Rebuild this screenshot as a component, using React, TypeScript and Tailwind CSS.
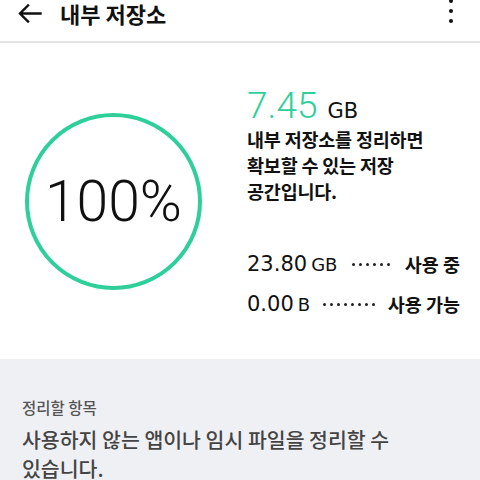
import React from "react";

const KR = "font-['Noto_Sans_CJK_KR',sans-serif]";
const NUM = "font-['Roboto','Noto_Sans_CJK_KR',sans-serif]";
const WIDE = "font-['DejaVu_Sans','Noto_Sans_CJK_KR',sans-serif]";

function BackArrow() {
  return (
    <svg width="24" height="19" viewBox="0 0 24 19" fill="none">
      <path
        d="M22.5 9.5H2.5M10 1.5L2 9.5l8 8"
        stroke="#111"
        strokeWidth="2.4"
        strokeLinecap="square"
      />
    </svg>
  );
}

function Dots({ count }: { count: number }) {
  return (
    <div className="flex items-center gap-[4px]">
      {Array.from({ length: count }).map((_, i) => (
        <span key={i} className="w-[3px] h-[3px] rounded-full bg-[#222]" />
      ))}
    </div>
  );
}

type Row = { value: string; unit: string; dots: number; label: string };

const rows: Row[] = [
  { value: "23.80", unit: "GB", dots: 6, label: "사용 중" },
  { value: "0.00", unit: "B", dots: 8, label: "사용 가능" },
];

export default function App() {
  return (
    <div className={`w-[480px] h-[480px] overflow-hidden bg-white ${KR}`}>
      <header className="h-[43px] flex items-start justify-between border-b-2 border-[#e3e3e3] pl-[18px] pr-[27px]">
        <div className="flex items-center h-[27px] gap-[18px]">
          <BackArrow />
          <h1 className={`text-[22px] leading-[27px] font-bold text-[#111] ${KR}`}>
            내부 저장소
          </h1>
        </div>
        <div className="flex flex-col items-center gap-[6px] -mt-[1px]">
          <span className="w-[4px] h-[4px] rounded-full bg-[#111]" />
          <span className="w-[4px] h-[4px] rounded-full bg-[#111]" />
          <span className="w-[4px] h-[4px] rounded-full bg-[#111]" />
        </div>
      </header>

      <section className="h-[316px] flex items-center pl-[25px]">
        <div className="w-[177px] h-[177px] shrink-0 rounded-full border-[4px] border-[#2fcf9a] flex items-center justify-center">
          <span className={`text-[57px] leading-none font-light text-[#111] ${NUM}`}>
            100%
          </span>
        </div>

        <div className="self-start mt-[44px] ml-[45px] w-[213px] flex flex-col">
          <div className="flex items-baseline">
            <span className={`text-[37px] leading-none font-light text-[#2fcf9a] ${NUM}`}>
              7.45
            </span>
            <span className={`ml-[10px] text-[21px] leading-none text-[#111] ${WIDE}`}>
              GB
            </span>
          </div>
          <p className="mt-[2px] text-[18.5px] leading-[26px] font-semibold text-[#111] tracking-[-0.2px]">
            내부 저장소를 정리하면
            <br />
            확보할 수 있는 저장
            <br />
            공간입니다.
          </p>

          <div className="mt-[47px] flex flex-col gap-[14px]">
            {rows.map((row) => (
              <div key={row.label} className="flex items-center h-[26px]">
                <div className={`flex items-baseline ${WIDE}`}>
                  <span className="text-[21px] leading-none text-[#111]">
                    {row.value}
                  </span>
                  <span className="ml-[4px] text-[18px] leading-none text-[#111]">
                    {row.unit}
                  </span>
                </div>
                <div className="flex-1 flex justify-center">
                  <Dots count={row.dots} />
                </div>
                <span className="text-[18.5px] leading-none font-semibold text-[#111]">
                  {row.label}
                </span>
              </div>
            ))}
          </div>
        </div>
      </section>

      <section className="bg-[#eff0f4] h-[121px] pt-[38px] px-[22px]">
        <h2 className="text-[15.5px] leading-[20px] font-medium text-[#555]">
          정리할 항목
        </h2>
        <p className="mt-[8px] text-[20.5px] leading-[29px] font-medium text-[#444] whitespace-nowrap">
          사용하지 않는 앱이나 임시 파일을 정리할 수
          <br />
          있습니다.
        </p>
      </section>
    </div>
  );
}
